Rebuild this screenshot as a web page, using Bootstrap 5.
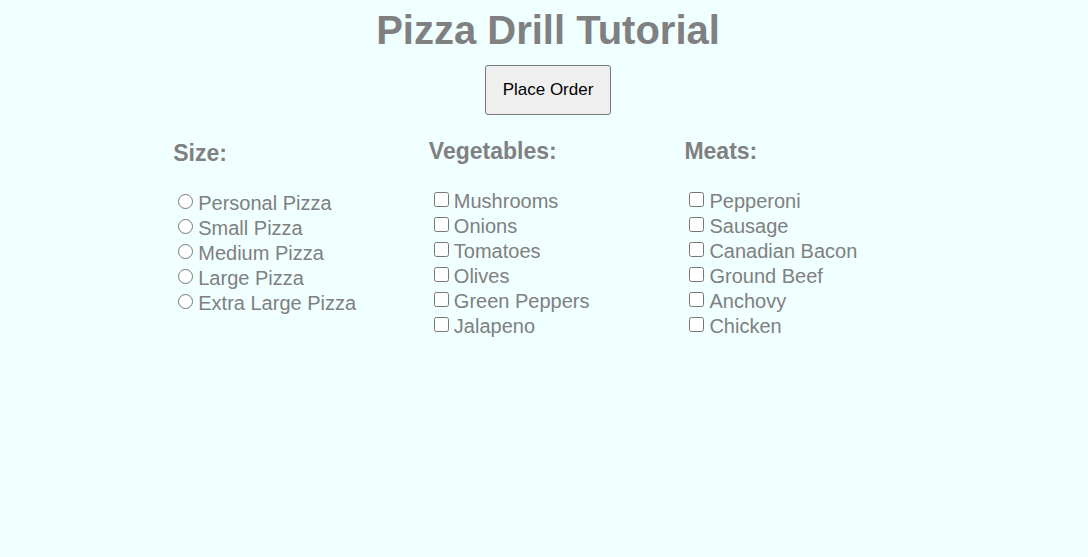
<!DOCTYPE html>
<html lang="en">
<head>
<meta charset="utf-8">
<meta name="viewport" content="width=device-width, initial-scale=1">
<title>Pizza Drill Tutorial</title>
<link href="https://cdn.jsdelivr.net/npm/bootstrap@5.3.0/dist/css/bootstrap.min.css" rel="stylesheet">
<style>
  body { padding-left: 8px; background: azure; color: gray; font-family: "Liberation Sans", Arial, sans-serif; font-size: 20px; }
  h1 { font-size: 40px; line-height: 44px; }
  h2 { margin-bottom: 25px; font-size: 23px; line-height: 26px; }
  .order-btn { margin-top: 13px; padding: 12px 17px; border: 1px solid #767676; border-radius: 3px; background: #efefef; color: #000; font-size: 17px; line-height: 24px; }
  .menu { width: 71%; margin-top: 23px; margin-left: 15.3%; }
  .sizes { padding-top: 2px; }
  .choices { padding-left: 5px; }
  .choice { display: flex; align-items: center; gap: 5px; line-height: 25px; }
  .choice input { width: 15px; height: 15px; margin: 0 0 4px; }
</style>
</head>
<body>
<header class="pt-2 text-center">
  <h1 class="fw-bold mb-0">Pizza Drill Tutorial</h1>
  <button type="submit" form="order" class="order-btn">Place Order</button>
</header>
<form id="order" class="menu">
  <div class="row g-0">
    <fieldset class="col-4 sizes">
      <h2 class="fw-bold">Size:</h2>
      <div class="choices">
        <label class="choice"><input type="radio" name="size" value="personal">Personal Pizza</label>
        <label class="choice"><input type="radio" name="size" value="small">Small Pizza</label>
        <label class="choice"><input type="radio" name="size" value="medium">Medium Pizza</label>
        <label class="choice"><input type="radio" name="size" value="large">Large Pizza</label>
        <label class="choice"><input type="radio" name="size" value="extra-large">Extra Large Pizza</label>
      </div>
    </fieldset>
    <fieldset class="col-4">
      <h2 class="fw-bold">Vegetables:</h2>
      <div class="choices">
        <label class="choice"><input type="checkbox" name="vegetables">Mushrooms</label>
        <label class="choice"><input type="checkbox" name="vegetables">Onions</label>
        <label class="choice"><input type="checkbox" name="vegetables">Tomatoes</label>
        <label class="choice"><input type="checkbox" name="vegetables">Olives</label>
        <label class="choice"><input type="checkbox" name="vegetables">Green Peppers</label>
        <label class="choice"><input type="checkbox" name="vegetables">Jalapeno</label>
      </div>
    </fieldset>
    <fieldset class="col-4">
      <h2 class="fw-bold">Meats:</h2>
      <div class="choices">
        <label class="choice"><input type="checkbox" name="meats">Pepperoni</label>
        <label class="choice"><input type="checkbox" name="meats">Sausage</label>
        <label class="choice"><input type="checkbox" name="meats">Canadian Bacon</label>
        <label class="choice"><input type="checkbox" name="meats">Ground Beef</label>
        <label class="choice"><input type="checkbox" name="meats">Anchovy</label>
        <label class="choice"><input type="checkbox" name="meats">Chicken</label>
      </div>
    </fieldset>
  </div>
</form>
<script src="https://cdn.jsdelivr.net/npm/bootstrap@5.3.0/dist/js/bootstrap.bundle.min.js"></script>
</body>
</html>
